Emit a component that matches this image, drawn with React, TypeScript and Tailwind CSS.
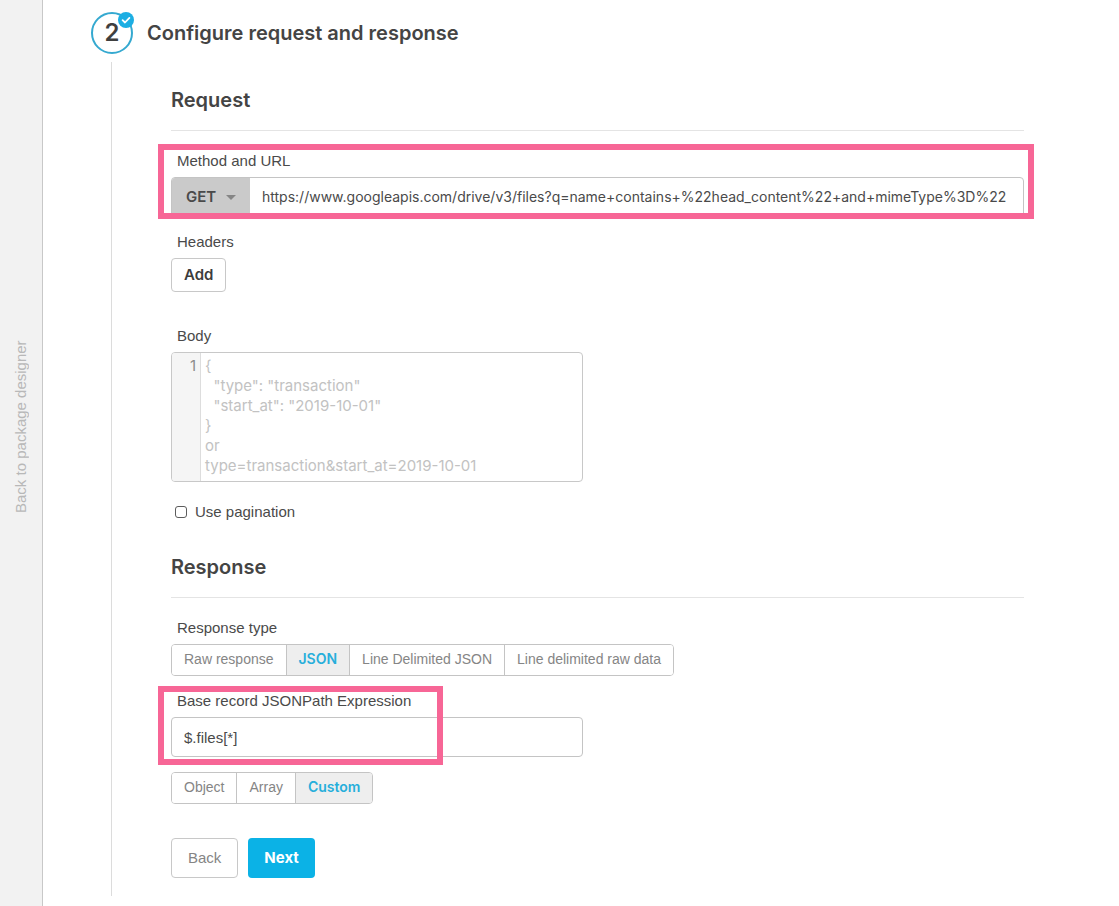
import { useState } from "react";
import clsx from "clsx";

const BODY_PLACEHOLDER = `{
  "type": "transaction"
  "start_at": "2019-10-01"
}
or
type=transaction&start_at=2019-10-01`;

const RESPONSE_TYPES = ["Raw response", "JSON", "Line Delimited JSON", "Line delimited raw data"];
const RECORD_TYPES = ["Object", "Array", "Custom"];

type SegmentedProps = {
  options: string[];
  value: string;
  onChange: (value: string) => void;
  label: string;
};

function Segmented({ options, value, onChange, label }: SegmentedProps) {
  return (
    <div
      role="group"
      aria-label={label}
      className="inline-flex h-8 divide-x divide-[#c4c4c4] self-start overflow-hidden rounded border border-[#c4c4c4]"
    >
      {options.map((option) => (
        <button
          key={option}
          type="button"
          aria-pressed={option === value}
          onClick={() => onChange(option)}
          className={clsx(
            "px-3 pb-[2px] text-sm whitespace-nowrap",
            option === value
              ? "bg-[#eeeeee] font-['Inter',sans-serif] font-semibold text-[#27aedb]"
              : "bg-white text-[#858585]"
          )}
        >
          {option}
        </button>
      ))}
    </div>
  );
}

export default function App() {
  const [method, setMethod] = useState("GET");
  const [url, setUrl] = useState(
    "https://www.googleapis.com/drive/v3/files?q=name+contains+%22head_content%22+and+mimeType%3D%22"
  );
  const [body, setBody] = useState("");
  const [pagination, setPagination] = useState(false);
  const [responseType, setResponseType] = useState("JSON");
  const [jsonPath, setJsonPath] = useState("$.files[*]");
  const [recordType, setRecordType] = useState("Custom");

  return (
    <div className="flex min-h-screen bg-white font-['Liberation_Sans',Arial,sans-serif] text-[15px] leading-5 text-[#4a4a4a]">
      <aside className="flex w-[43px] shrink-0 border-r border-[#c8c8c8] bg-[#f2f2f2]">
        <button
          type="button"
          className="flex w-full rotate-180 items-center justify-center pt-[53px] text-[15px] text-[#b8b8b8] [writing-mode:vertical-rl]"
        >
          Back to package designer
        </button>
      </aside>

      <main className="min-w-0 flex-1 pt-3 pr-[95px] pl-12">
        <header className="flex items-center gap-[14px] font-['Inter',sans-serif]">
          <div className="relative flex size-[42px] items-center justify-center rounded-full border-2 border-[#35a9d0] text-2xl font-semibold text-[#3f3f3f]">
            2
            <svg viewBox="0 0 16 16" className="absolute -top-[2px] -right-[3px] size-4" aria-hidden="true">
              <circle cx="8" cy="8" r="8" fill="#1caee3" />
              <path
                d="M4.6 8.2l2.4 2.3 4.4-4.6"
                fill="none"
                stroke="#fff"
                strokeWidth="1.8"
                strokeLinecap="round"
                strokeLinejoin="round"
              />
            </svg>
          </div>
          <h1 className="text-xl font-semibold text-[#444444]">Configure request and response</h1>
        </header>

        <form
          onSubmit={(e) => e.preventDefault()}
          className="mt-2 ml-5 flex flex-col border-l border-[#dcdcdc] pt-6 pb-[18px] pl-[59px]"
        >
          <h2 className="border-b border-[#e4e4e4] pb-4 font-['Inter',sans-serif] text-xl leading-7 font-semibold text-[#444444]">
            Request
          </h2>

          <div className="relative mt-5">
            <label htmlFor="url" className="mb-[6px] block pl-[6px]">
              Method and URL
            </label>
            <div className="flex h-10 overflow-hidden rounded border border-[#c4c4c4]">
              <div className="relative w-[78px] shrink-0 bg-[#cacaca]">
                <select
                  aria-label="Method"
                  value={method}
                  onChange={(e) => setMethod(e.target.value)}
                  className="h-full w-full appearance-none pl-[14px] font-['Inter',sans-serif] font-semibold text-[#4a4a4a] outline-none"
                >
                  <option>GET</option>
                  <option>POST</option>
                </select>
                <svg
                  viewBox="0 0 10 5"
                  className="pointer-events-none absolute top-[17px] right-[14px] h-[5px] w-[10px]"
                  aria-hidden="true"
                >
                  <path d="M0 0h10L5 5z" fill="#858585" />
                </svg>
              </div>
              <input
                id="url"
                type="text"
                value={url}
                onChange={(e) => setUrl(e.target.value)}
                className="mr-3 ml-3 min-w-0 flex-1 font-['Inter',sans-serif] text-sm outline-none"
              />
            </div>
            <div className="pointer-events-none absolute -top-[7px] -right-[10px] -bottom-[2px] -left-[13px] border-[6px] border-[#f76696]" />
          </div>

          <span className="mt-[15px] mb-[6px] pl-[6px]">Headers</span>
          <button
            type="button"
            className="h-[34px] self-start rounded border border-[#c8c8c8] px-3 font-['Inter',sans-serif] font-semibold text-[#3c3c3c]"
          >
            Add
          </button>

          <label htmlFor="body" className="mt-[34px] mb-[6px] pl-[6px]">
            Body
          </label>
          <div className="flex h-[130px] max-w-[412px] overflow-hidden rounded border border-[#c8c8c8] font-['Inter',sans-serif]">
            <div className="w-[29px] shrink-0 border-r border-[#dddddd] bg-[#f5f5f5] pt-[3px] pr-1 text-right text-[#8c8c8c]">
              1
            </div>
            <textarea
              id="body"
              value={body}
              onChange={(e) => setBody(e.target.value)}
              placeholder={BODY_PLACEHOLDER}
              className="min-w-0 flex-1 resize-none px-1 pt-[3px] outline-none placeholder:text-[#c2c2c2]"
            />
          </div>

          <label className="mt-5 flex items-center gap-2 self-start pl-1">
            <input
              type="checkbox"
              checked={pagination}
              onChange={(e) => setPagination(e.target.checked)}
              className="size-3 appearance-none rounded-[3px] border border-[#5c5c5c] checked:bg-[#0bb2e6]"
            />
            Use pagination
          </label>

          <h2 className="mt-[31px] border-b border-[#e4e4e4] pb-4 font-['Inter',sans-serif] text-xl leading-7 font-semibold text-[#444444]">
            Response
          </h2>

          <span className="mt-5 mb-[6px] pl-[6px]">Response type</span>
          <Segmented
            label="Response type"
            options={RESPONSE_TYPES}
            value={responseType}
            onChange={setResponseType}
          />

          <div className="relative mt-[15px] max-w-[412px]">
            <label htmlFor="json-path" className="mb-[6px] block pl-[6px]">
              Base record JSONPath Expression
            </label>
            <input
              id="json-path"
              type="text"
              value={jsonPath}
              onChange={(e) => setJsonPath(e.target.value)}
              className="block h-10 w-full rounded border border-[#c4c4c4] px-3 outline-none"
            />
            <div className="pointer-events-none absolute -top-[5px] -bottom-2 -left-[13px] w-[285px] border-[6px] border-[#f76696]" />
          </div>

          <div className="mt-[15px] flex">
            <Segmented label="Record type" options={RECORD_TYPES} value={recordType} onChange={setRecordType} />
          </div>

          <div className="mt-[34px] flex gap-[10px]">
            <button type="button" className="h-10 rounded border border-[#c8c8c8] px-4 text-[#858585]">
              Back
            </button>
            <button
              type="submit"
              className="h-10 rounded bg-[#0bb2e6] px-4 font-['Inter',sans-serif] font-bold text-white"
            >
              Next
            </button>
          </div>
        </form>
      </main>
    </div>
  );
}
